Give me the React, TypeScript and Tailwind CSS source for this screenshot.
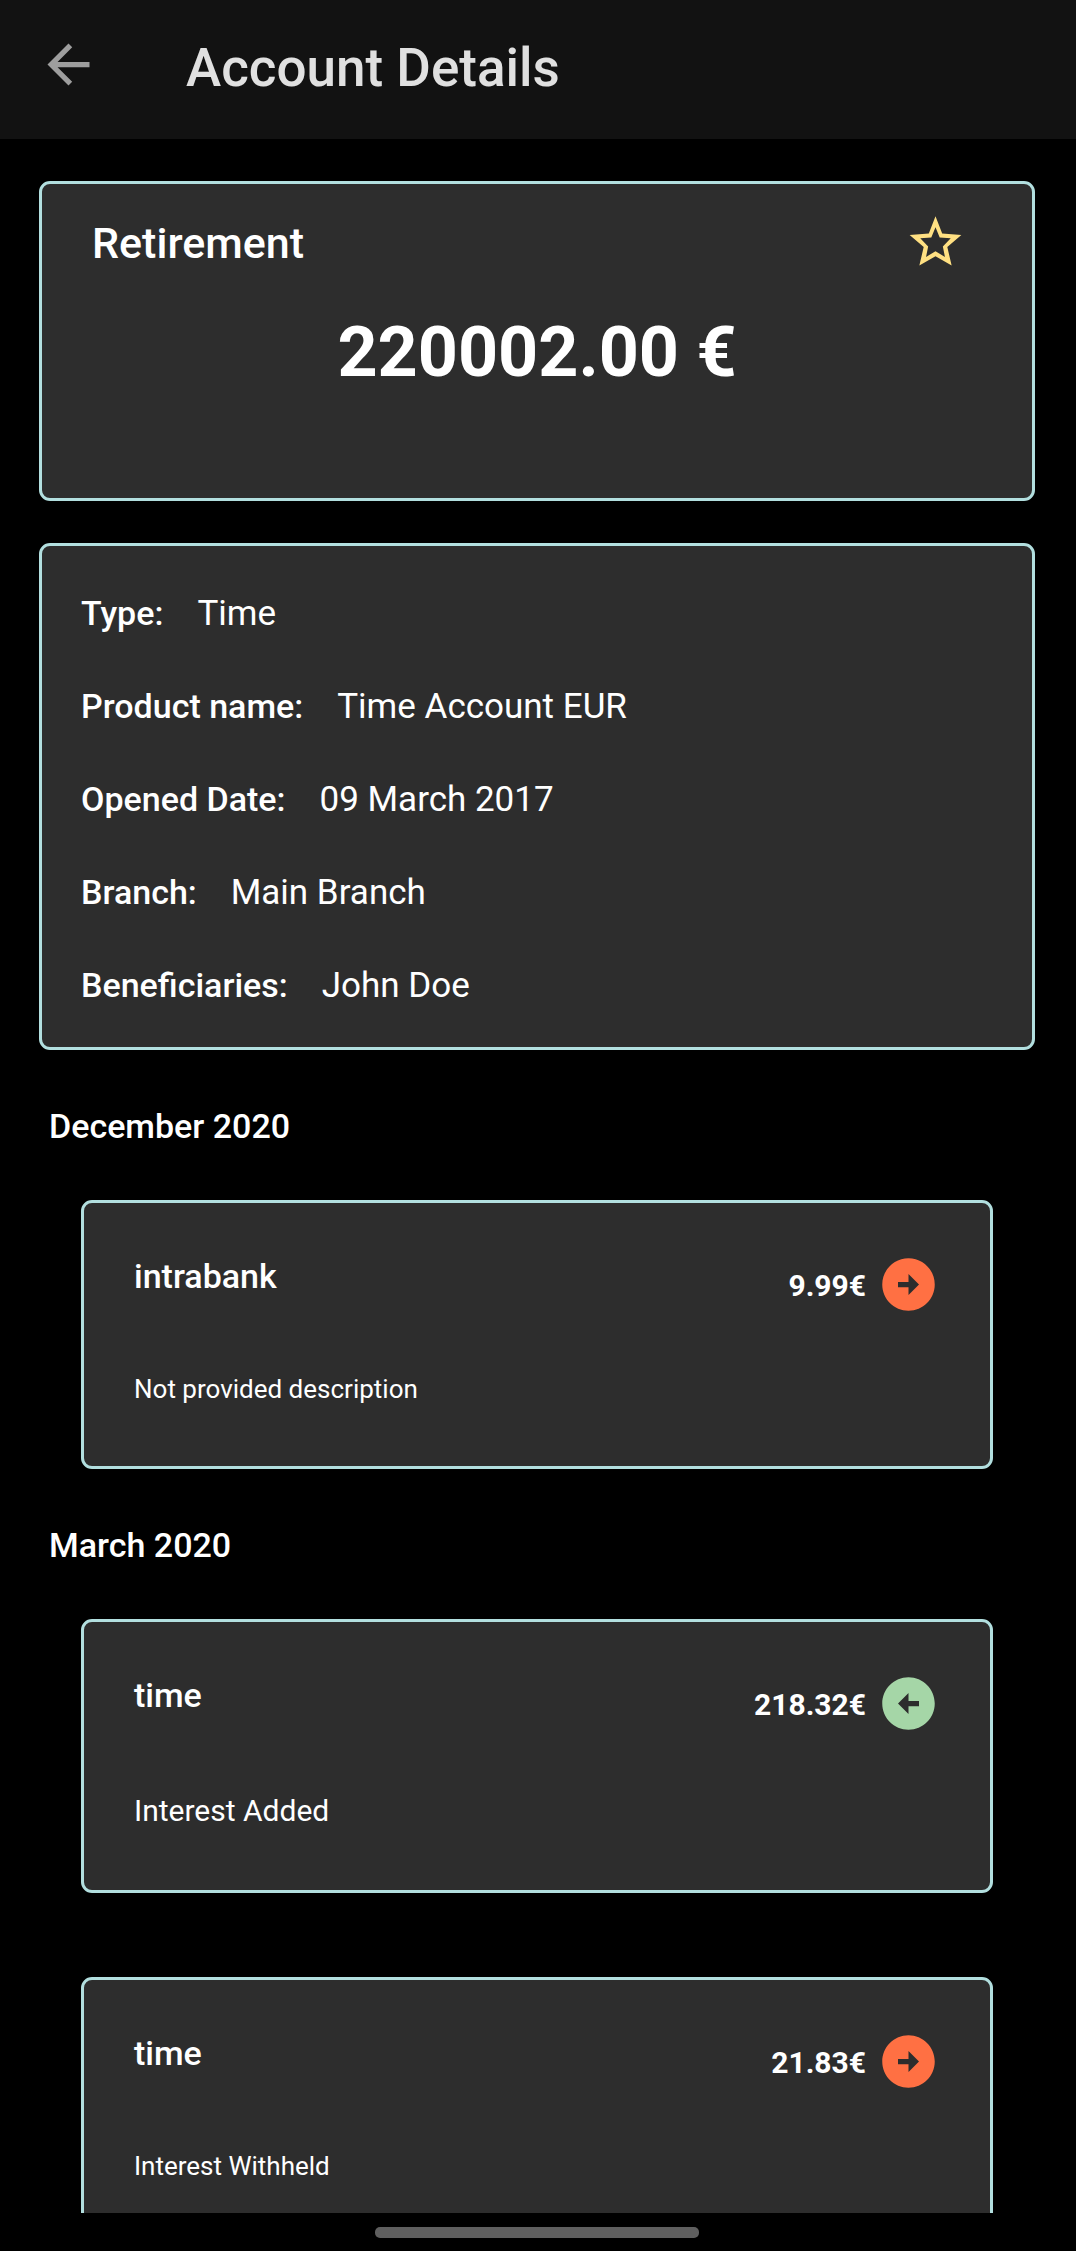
import { useState } from "react";

type Transaction = {
  id: number;
  title: string;
  description: string;
  amount: string;
  incoming: boolean;
  compact: boolean;
};

type Month = { name: string; transactions: Transaction[] };

const details = [
  { label: "Type:", value: "Time" },
  { label: "Product name:", value: "Time Account EUR" },
  { label: "Opened Date:", value: "09 March 2017" },
  { label: "Branch:", value: "Main Branch" },
  { label: "Beneficiaries:", value: "John Doe" },
];

const months: Month[] = [
  {
    name: "December 2020",
    transactions: [
      { id: 1, title: "intrabank", description: "Not provided description", amount: "9.99€", incoming: false, compact: true },
    ],
  },
  {
    name: "March 2020",
    transactions: [
      { id: 2, title: "time", description: "Interest Added", amount: "218.32€", incoming: true, compact: false },
      { id: 3, title: "time", description: "Interest Withheld", amount: "21.83€", incoming: false, compact: true },
    ],
  },
];

function BackIcon() {
  return (
    <svg viewBox="0 0 24 24" className="size-[63px]" fill="currentColor" aria-hidden="true">
      <path d="M20 11H7.83l5.59-5.59L12 4l-8 8 8 8 1.41-1.41L7.83 13H20v-2z" />
    </svg>
  );
}

function StarIcon({ filled }: { filled: boolean }) {
  return (
    <svg viewBox="0 0 24 24" className="size-[63px]" fill="currentColor" aria-hidden="true">
      {filled ? (
        <path d="M12 17.27 18.18 21l-1.64-7.03L22 9.24l-7.19-.61L12 2 9.19 8.63 2 9.24l5.46 4.73L5.82 21z" />
      ) : (
        <path
          fillRule="evenodd"
          d="M12 2l2.55 6.6 7.3.5-5.35 4.6 1.65 7.1L12 17.2l-6.15 3.6 1.65-7.1L2.15 9.1l7.3-.5zM12 6.2l-1.6 3.9-4.2.3 3 3.1-.8 4L12 15.3l3.6 2.2-.8-4 3-3.1-4.2-.3z"
        />
      )}
    </svg>
  );
}

function DirectionIcon({ incoming }: { incoming: boolean }) {
  return incoming ? (
    <svg viewBox="0 0 24 24" className="size-[63px] text-[#a5d6a7]" fill="currentColor" role="img" aria-label="Incoming">
      <path d="M2 12c0 5.52 4.48 10 10 10s10-4.48 10-10S17.52 2 12 2 2 6.48 2 12zm10-1h4v2h-4v3l-4-4 4-4v3z" />
    </svg>
  ) : (
    <svg viewBox="0 0 24 24" className="size-[63px] text-[#ff7043]" fill="currentColor" role="img" aria-label="Outgoing">
      <path d="M22 12c0-5.52-4.48-10-10-10S2 6.48 2 12s4.48 10 10 10 10-4.48 10-10zm-10 1H8v-2h4V8l4 4-4 4v-3z" />
    </svg>
  );
}

function TransactionCard({ item }: { item: Transaction }) {
  return (
    <li className="flex items-start justify-between rounded-[11px] border-3 border-[#b2dfdf] bg-[#2d2d2d] px-[50px] pt-[50px] pb-[61px]">
      <div className="pt-[3px]">
        <h3 className="text-[34px] leading-[40px] font-medium">{item.title}</h3>
        <p className={item.compact ? "mt-[78px] text-[26px] leading-[31px]" : "mt-[78px] text-[30px] leading-[36px]"}>
          {item.description}
        </p>
      </div>
      <div className="flex items-center gap-[11px]">
        <span className="pt-[2px] text-[30px] leading-[36px] font-bold">{item.amount}</span>
        <DirectionIcon incoming={item.incoming} />
      </div>
    </li>
  );
}

export default function App() {
  const [favourite, setFavourite] = useState(false);

  return (
    <div className="flex h-screen flex-col bg-black font-['Roboto',sans-serif] text-white">
      <header className="flex shrink-0 items-end gap-[86px] bg-[#121212] px-[37px] pt-[33px] pb-[43px]">
        <button type="button" aria-label="Back" className="text-[#9e9e9e]">
          <BackIcon />
        </button>
        <h1 className="text-[53px] leading-[56px] font-medium text-[#e0e0e0]">Account Details</h1>
      </header>

      <main className="min-h-0 flex-1 overflow-hidden pt-[42px] pr-[41px] pl-[39px]">
        <section className="rounded-[11px] border-3 border-[#b2dfdf] bg-[#2d2d2d] pt-[27px] pb-[106px]">
          <div className="flex items-start justify-between pr-[65px] pl-[50px]">
            <h2 className="pt-[8px] text-[43px] leading-[48px] font-medium">Retirement</h2>
            <button
              type="button"
              aria-label="Favourite"
              aria-pressed={favourite}
              onClick={() => setFavourite(!favourite)}
              className="text-[#ffe082]"
            >
              <StarIcon filled={favourite} />
            </button>
          </div>
          <p className="mt-[38px] text-center text-[70px] leading-[80px] font-bold">220002.00 €</p>
        </section>

        <dl className="mt-[42px] flex flex-col gap-[53px] rounded-[11px] border-3 border-[#b2dfdf] bg-[#2d2d2d] px-[39px] pt-[47px] pb-[42px]">
          {details.map((row) => (
            <div key={row.label} className="flex items-baseline gap-[34px]">
              <dt className="text-[34px] leading-[40px] font-medium">{row.label}</dt>
              <dd className="text-[35px] leading-[38px]">{row.value}</dd>
            </div>
          ))}
        </dl>

        {months.map((month) => (
          <section key={month.name} className="mt-[56px]">
            <h2 className="pl-[10px] text-[34px] leading-[40px] font-medium">{month.name}</h2>
            <ul className="mt-[54px] flex flex-col gap-[84px] px-[42px]">
              {month.transactions.map((item) => (
                <TransactionCard key={item.id} item={item} />
              ))}
            </ul>
          </section>
        ))}
      </main>

      <footer className="flex shrink-0 justify-center bg-black pt-[14px] pr-[2px] pb-[13px]">
        <div className="h-[11px] w-[324px] rounded-[5px] bg-[#5f5f5f]" />
      </footer>
    </div>
  );
}
